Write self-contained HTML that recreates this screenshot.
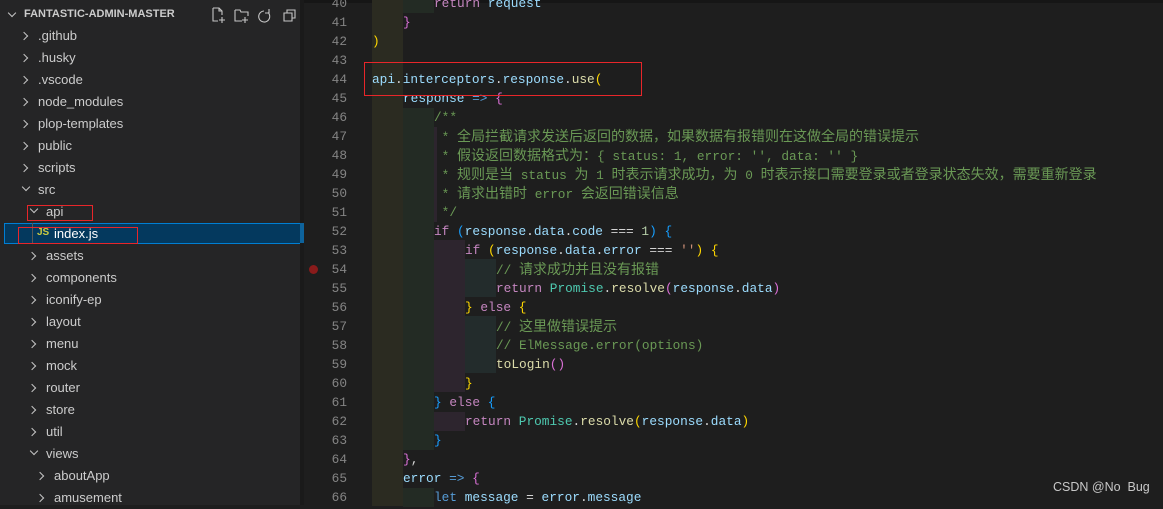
<!DOCTYPE html>
<html><head><meta charset="utf-8"><style>
*{margin:0;padding:0;box-sizing:border-box}
body{width:1163px;height:505px;overflow:hidden;background:#1e1e1e;position:relative;font-family:"Liberation Sans","Noto Sans CJK SC",sans-serif}
#side{position:absolute;left:0;top:0;width:304px;height:505px;background:#252526;color:#cccccc;font-size:13px}
.hd{position:absolute;left:24px;top:8px;font-size:11px;font-weight:bold;color:#cccccc}
.row{position:absolute;height:22px;line-height:22px;white-space:nowrap}
.chev{position:absolute;width:6px;height:6px;border-right:1.2px solid #c5c5c5;border-bottom:1.2px solid #c5c5c5}
.cr{transform:rotate(-45deg)}
.cd{transform:rotate(45deg)}
.ln{position:absolute;left:304px;width:43px;text-align:right;color:#858585;font-family:"Liberation Mono",monospace;font-size:12.8px;height:19px;line-height:19px}
.cl{position:absolute;height:19px;line-height:19px;font-family:"Liberation Mono","Noto Sans CJK SC",monospace;font-size:12.8px;white-space:pre;color:#d4d4d4}
.cj{font-size:14px;font-family:"Noto Sans CJK SC",sans-serif}
.ib{position:absolute;height:19px;width:31px}
.v{color:#9cdcfe}.f{color:#dcdcaa}.k{color:#c586c0}.b{color:#569cd6}.t{color:#4ec9b0}.c{color:#6a9955}.s{color:#ce9178}
.y{color:#ffd700}.p{color:#da70d6}.bl{color:#179fff}
.red{position:absolute;border:1.5px solid #e8262a}
</style></head><body>
<div id="side">
<div class="chev cd" style="left:9px;top:10px"></div>
<div class="hd">FANTASTIC-ADMIN-MASTER</div>
<svg style="position:absolute;left:208px;top:6px" width="96" height="18" fill="none" stroke="#c5c5c5" stroke-width="1.1">
<path d="M5 2h6l3 3v4M5 2v13h5M11 2v3h3M14 11v6M11 14h6"/>
<path d="M27 4h5l1 2h7v4M27 4v11h7M37 11v6M34 14h6"/>
<path d="M56 5a5.5 5.5 0 1 0 4 1.5M61 3v4h-4"/>
<path d="M76 7h8v8h-8zM79 7V4h8v8h-3"/>
</svg>
<div class="chev cr" style="left:21px;top:33px"></div><div class="row" style="left:38px;top:25px">.github</div>
<div class="chev cr" style="left:21px;top:55px"></div><div class="row" style="left:38px;top:47px">.husky</div>
<div class="chev cr" style="left:21px;top:77px"></div><div class="row" style="left:38px;top:69px">.vscode</div>
<div class="chev cr" style="left:21px;top:99px"></div><div class="row" style="left:38px;top:91px">node_modules</div>
<div class="chev cr" style="left:21px;top:121px"></div><div class="row" style="left:38px;top:113px">plop-templates</div>
<div class="chev cr" style="left:21px;top:143px"></div><div class="row" style="left:38px;top:135px">public</div>
<div class="chev cr" style="left:21px;top:165px"></div><div class="row" style="left:38px;top:157px">scripts</div>
<div class="chev cd" style="left:23px;top:184px"></div><div class="row" style="left:38px;top:179px">src</div>
<div class="chev cd" style="left:31px;top:206px"></div><div class="row" style="left:46px;top:201px">api</div>
<div style="position:absolute;left:4px;top:223px;width:299px;height:21px;background:#04395e;border:1px solid #007fd4"></div>
<div style="position:absolute;left:32px;top:223px;width:1px;height:21px;background:#585858"></div>
<div class="row" style="left:37px;top:222px;font-size:10px;font-weight:bold;color:#cbcb41">JS</div>
<div class="row" style="left:54px;top:223px;color:#fff">index.js</div>
<div class="chev cr" style="left:29px;top:253px"></div><div class="row" style="left:46px;top:245px">assets</div>
<div class="chev cr" style="left:29px;top:275px"></div><div class="row" style="left:46px;top:267px">components</div>
<div class="chev cr" style="left:29px;top:297px"></div><div class="row" style="left:46px;top:289px">iconify-ep</div>
<div class="chev cr" style="left:29px;top:319px"></div><div class="row" style="left:46px;top:311px">layout</div>
<div class="chev cr" style="left:29px;top:341px"></div><div class="row" style="left:46px;top:333px">menu</div>
<div class="chev cr" style="left:29px;top:363px"></div><div class="row" style="left:46px;top:355px">mock</div>
<div class="chev cr" style="left:29px;top:385px"></div><div class="row" style="left:46px;top:377px">router</div>
<div class="chev cr" style="left:29px;top:407px"></div><div class="row" style="left:46px;top:399px">store</div>
<div class="chev cr" style="left:29px;top:429px"></div><div class="row" style="left:46px;top:421px">util</div>
<div class="chev cd" style="left:31px;top:448px"></div><div class="row" style="left:46px;top:443px">views</div>
<div class="chev cr" style="left:37px;top:473px"></div><div class="row" style="left:54px;top:465px">aboutApp</div>
<div class="chev cr" style="left:37px;top:495px"></div><div class="row" style="left:54px;top:487px">amusement</div>
<div class="red" style="left:27px;top:205px;width:66px;height:16px"></div>
<div class="red" style="left:18px;top:227px;width:120px;height:17px"></div>
</div>
<div style="position:absolute;left:300px;top:0;width:4px;height:505px;background:#1a1a1a"></div>
<div style="position:absolute;left:304px;top:0;right:0;height:3px;background:#161616"></div>

<div class="ib" style="left:372px;top:-6px;height:114px;background:#2b2b21"></div>
<div class="ib" style="left:372px;top:88px;height:380px;background:#2b2b21"></div>
<div class="ib" style="left:372px;top:468px;height:38px;background:#2b2b21"></div>
<div class="ib" style="left:403px;top:-6px;height:19px;background:#232b24"></div>
<div class="ib" style="left:403px;top:108px;height:342px;background:#232b24"></div>
<div class="ib" style="left:403px;top:488px;height:19px;background:#232b24"></div>
<div class="ib" style="left:434px;top:240px;height:152px;background:#2d252e"></div>
<div class="ib" style="left:434px;top:412px;height:19px;background:#2d252e"></div>
<div class="ib" style="left:434px;top:127px;width:3px;height:95px;background:#2d252e"></div>
<div class="ib" style="left:465px;top:259px;height:38px;background:#232c2c"></div>
<div class="ib" style="left:465px;top:316px;height:57px;background:#232c2c"></div>

<div class="ln" style="top:-6px">40</div><div class="cl" style="left:434px;top:-6px"><span class="k">return</span> <span class="v">request</span></div>
<div class="ln" style="top:13px">41</div><div class="cl" style="left:403px;top:13px"><span class="p">}</span></div>
<div class="ln" style="top:32px">42</div><div class="cl" style="left:372px;top:32px"><span class="y">)</span></div>
<div class="ln" style="top:51px">43</div>
<div class="ln" style="top:70px">44</div><div class="cl" style="left:372px;top:70px"><span class="v">api</span>.<span class="v">interceptors</span>.<span class="v">response</span>.<span class="f">use</span><span class="y">(</span></div>
<div class="ln" style="top:89px">45</div><div class="cl" style="left:403px;top:89px"><span class="v">response</span> <span class="b">=&gt;</span> <span class="p">{</span></div>
<div class="ln" style="top:108px">46</div><div class="cl c" style="left:434px;top:108px">/**</div>
<div class="ln" style="top:127px">47</div><div class="cl c" style="left:434px;top:127px"> * <span class="cj">全局拦截请求发送后返回的数据，如果数据有报错则在这做全局的错误提示</span></div>
<div class="ln" style="top:146px">48</div><div class="cl c" style="left:434px;top:146px"> * <span class="cj">假设返回数据格式为：</span>{ status: 1, error: '', data: '' }</div>
<div class="ln" style="top:165px">49</div><div class="cl c" style="left:434px;top:165px"> * <span class="cj">规则是当</span> status <span class="cj">为</span> 1 <span class="cj">时表示请求成功，为</span> 0 <span class="cj">时表示接口需要登录或者登录状态失效，需要重新登录</span></div>
<div class="ln" style="top:184px">50</div><div class="cl c" style="left:434px;top:184px"> * <span class="cj">请求出错时</span> error <span class="cj">会返回错误信息</span></div>
<div class="ln" style="top:203px">51</div><div class="cl c" style="left:434px;top:203px"> */</div>
<div class="ln" style="top:222px">52</div><div class="cl" style="left:434px;top:222px"><span class="k">if</span> <span class="bl">(</span><span class="v">response</span>.<span class="v">data</span>.<span class="v">code</span> === <span style="color:#b5cea8">1</span><span class="bl">)</span> <span class="bl">{</span></div>
<div class="ln" style="top:241px">53</div><div class="cl" style="left:465px;top:241px"><span class="k">if</span> <span class="y">(</span><span class="v">response</span>.<span class="v">data</span>.<span class="v">error</span> === <span class="s">''</span><span class="y">)</span> <span class="y">{</span></div>
<div style="position:absolute;left:309px;top:265px;width:9px;height:9px;border-radius:50%;background:#8a1b1b"></div>
<div class="ln" style="top:260px">54</div><div class="cl c" style="left:496px;top:260px">// <span class="cj">请求成功并且没有报错</span></div>
<div class="ln" style="top:279px">55</div><div class="cl" style="left:496px;top:279px"><span class="k">return</span> <span class="t">Promise</span>.<span class="f">resolve</span><span class="p">(</span><span class="v">response</span>.<span class="v">data</span><span class="p">)</span></div>
<div class="ln" style="top:298px">56</div><div class="cl" style="left:465px;top:298px"><span class="y">}</span> <span class="k">else</span> <span class="y">{</span></div>
<div class="ln" style="top:317px">57</div><div class="cl c" style="left:496px;top:317px">// <span class="cj">这里做错误提示</span></div>
<div class="ln" style="top:336px">58</div><div class="cl c" style="left:496px;top:336px">// ElMessage.error(options)</div>
<div class="ln" style="top:355px">59</div><div class="cl" style="left:496px;top:355px"><span class="f">toLogin</span><span class="p">()</span></div>
<div class="ln" style="top:374px">60</div><div class="cl" style="left:465px;top:374px"><span class="y">}</span></div>
<div class="ln" style="top:393px">61</div><div class="cl" style="left:434px;top:393px"><span class="bl">}</span> <span class="k">else</span> <span class="bl">{</span></div>
<div class="ln" style="top:412px">62</div><div class="cl" style="left:465px;top:412px"><span class="k">return</span> <span class="t">Promise</span>.<span class="f">resolve</span><span class="y">(</span><span class="v">response</span>.<span class="v">data</span><span class="y">)</span></div>
<div class="ln" style="top:431px">63</div><div class="cl" style="left:434px;top:431px"><span class="bl">}</span></div>
<div class="ln" style="top:450px">64</div><div class="cl" style="left:403px;top:450px"><span class="p">}</span>,</div>
<div class="ln" style="top:469px">65</div><div class="cl" style="left:403px;top:469px"><span class="v">error</span> <span class="b">=&gt;</span> <span class="p">{</span></div>
<div class="ln" style="top:488px">66</div><div class="cl" style="left:434px;top:488px"><span class="b">let</span> <span class="v">message</span> = <span class="v">error</span>.<span class="v">message</span></div>

<div style="position:absolute;left:300px;top:223px;width:4px;height:20px;background:#0e639c"></div>
<div class="red" style="left:364px;top:62px;width:278px;height:34px"></div>
<div style="position:absolute;left:1053px;top:480px;font-size:12.5px;color:#c8c8c8;white-space:pre">CSDN @No  Bug</div>
</body></html>
